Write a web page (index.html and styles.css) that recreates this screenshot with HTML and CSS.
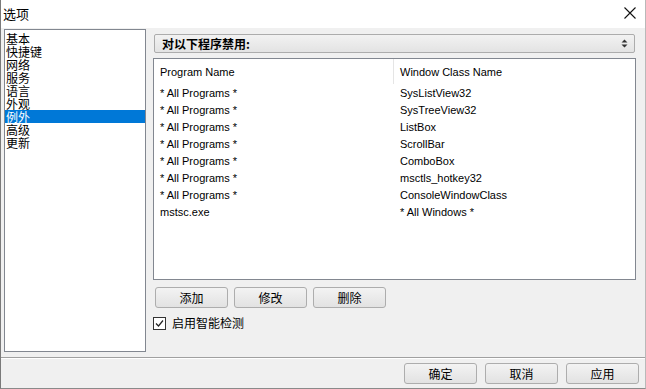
FILE: index.html
```html
<!DOCTYPE html>
<html lang="zh-CN">
<head>
    <meta charset="UTF-8">
    <title>选项</title>
    <link rel="stylesheet" href="styles.css">
</head>
<body>
    <div class="window">
        <div class="titlebar">
            <span class="title">选项</span>
            <svg class="close" width="12" height="12" viewBox="0 0 12 12">
                <path d="M0.5 0.5 L11.5 11.5 M11.5 0.5 L0.5 11.5" stroke="#111" stroke-width="1.1" fill="none"/>
            </svg>
        </div>
        <div class="client">
            <div class="main">
                <ul class="nav">
                    <li>基本</li>
                    <li>快捷键</li>
                    <li>网络</li>
                    <li>服务</li>
                    <li>语言</li>
                    <li>外观</li>
                    <li class="active">例外</li>
                    <li>高级</li>
                    <li>更新</li>
                </ul>
                <div class="panel">
                    <div class="combo">
                        <span>对以下程序禁用:</span>
                        <svg class="spin" width="7" height="9" viewBox="0 0 7 9">
                            <path d="M3.5 0.5 L6.5 3.5 L0.5 3.5 Z M0.5 5.5 L6.5 5.5 L3.5 8.5 Z" fill="#333"/>
                        </svg>
                    </div>
                    <div class="listview">
                        <div class="row head">
                            <div class="col first">Program Name</div>
                            <div class="col">Window Class Name</div>
                        </div>
                        <div class="row">
                            <div class="col first">* All Programs *</div>
                            <div class="col">SysListView32</div>
                        </div>
                        <div class="row">
                            <div class="col first">* All Programs *</div>
                            <div class="col">SysTreeView32</div>
                        </div>
                        <div class="row">
                            <div class="col first">* All Programs *</div>
                            <div class="col">ListBox</div>
                        </div>
                        <div class="row">
                            <div class="col first">* All Programs *</div>
                            <div class="col">ScrollBar</div>
                        </div>
                        <div class="row">
                            <div class="col first">* All Programs *</div>
                            <div class="col">ComboBox</div>
                        </div>
                        <div class="row">
                            <div class="col first">* All Programs *</div>
                            <div class="col">msctls_hotkey32</div>
                        </div>
                        <div class="row">
                            <div class="col first">* All Programs *</div>
                            <div class="col">ConsoleWindowClass</div>
                        </div>
                        <div class="row">
                            <div class="col first">mstsc.exe</div>
                            <div class="col">* All Windows *</div>
                        </div>
                    </div>
                    <div class="actions">
                        <button class="btn">添加</button>
                        <button class="btn">修改</button>
                        <button class="btn">删除</button>
                    </div>
                    <label class="check">
                        <span class="box">
                            <svg width="9" height="9" viewBox="0 0 9 9">
                                <path d="M1 4.5 L3.5 7 L8 1.5" stroke="#222" stroke-width="1.2" fill="none"/>
                            </svg>
                        </span>
                        启用智能检测
                    </label>
                </div>
            </div>
            <div class="footer">
                <button class="btn">确定</button>
                <button class="btn">取消</button>
                <button class="btn">应用</button>
            </div>
        </div>
    </div>
</body>
</html>
```
FILE: styles.css
```css
* {
    margin: 0;
    padding: 0;
    list-style: none;
    box-sizing: border-box;
}

body {
    background: #fff;
    font-family: "Liberation Sans", "Noto Sans CJK SC", sans-serif;
    font-size: 11px;
    color: #000;
}

.window {
    width: 646px;
    height: 389px;
    border-left: 1px solid #7a7a7a;
    border-right: 1px solid #b9b9b9;
    border-bottom: 1px solid #8a8a8a;
    display: flex;
    flex-direction: column;
}

.titlebar {
    height: 28px;
    background: #fff;
    display: flex;
    align-items: center;
    justify-content: space-between;
    padding: 0 9px 2px 2px;
}

.titlebar .title {
    font-family: "Noto Sans CJK SC", sans-serif;
    font-size: 13px;
}

.client {
    flex: 1;
    background: #f0f0f0;
    display: flex;
    flex-direction: column;
    padding: 1px 3px 0 3px;
}

.main {
    display: flex;
    gap: 7px;
    height: 323px;
}

.nav {
    width: 142px;
    height: 323px;
    background: #fff;
    border: 1px solid #828790;
    padding: 2px 0 0 0;
    font-family: "Noto Sans CJK SC", sans-serif;
    font-size: 12px;
}

.nav li {
    height: 13px;
    line-height: 13px;
    padding-left: 1px;
    white-space: nowrap;
}

.nav li.active {
    background: #0078d7;
    color: #fff;
}

.panel {
    width: 483px;
    display: flex;
    flex-direction: column;
    padding-top: 5px;
}

.combo {
    width: 481px;
    height: 19px;
    margin-left: 1px;
    border: 1px solid #acacac;
    border-radius: 2px;
    background: linear-gradient(#f2f2f2, #e3e3e3);
    display: flex;
    align-items: center;
    justify-content: space-between;
    padding: 0 6px 0 7px;
    font-family: "Noto Sans CJK SC", sans-serif;
    font-size: 12px;
    font-weight: bold;
}

.listview {
    margin-top: 5px;
    height: 222px;
    background: #fff;
    border: 1px solid #828790;
}

.row {
    display: flex;
    height: 17px;
    line-height: 17px;
    white-space: nowrap;
}

.row.head {
    height: 25px;
    line-height: 26px;
    margin-bottom: 1px;
}

.col {
    padding-left: 6px;
}

.col.first {
    width: 240px;
}

.row.head .col.first {
    border-right: 1px solid #e5e5e5;
}

.actions {
    display: flex;
    gap: 6px;
    margin: 7px 0 0 2px;
}

.btn {
    width: 73px;
    height: 21px;
    border: 1px solid #adadad;
    border-radius: 3px;
    background: linear-gradient(#f3f3f3, #e2e2e2);
    font-family: "Noto Sans CJK SC", sans-serif;
    font-size: 12px;
    line-height: 17px;
    color: #000;
}

.check {
    display: flex;
    align-items: center;
    gap: 6px;
    margin-top: 8px;
    font-family: "Noto Sans CJK SC", sans-serif;
    font-size: 12px;
    line-height: 14px;
}

.check .box {
    width: 13px;
    height: 13px;
    border: 1px solid #333;
    background: #fff;
    display: flex;
    align-items: center;
    justify-content: center;
}

.footer {
    margin: 5px -3px 0 -3px;
    border-top: 1px solid #a0a0a0;
    box-shadow: inset 0 1px 0 #fff;
    display: flex;
    justify-content: flex-end;
    gap: 8px;
    padding: 5px 6px 0 0;
}
```
